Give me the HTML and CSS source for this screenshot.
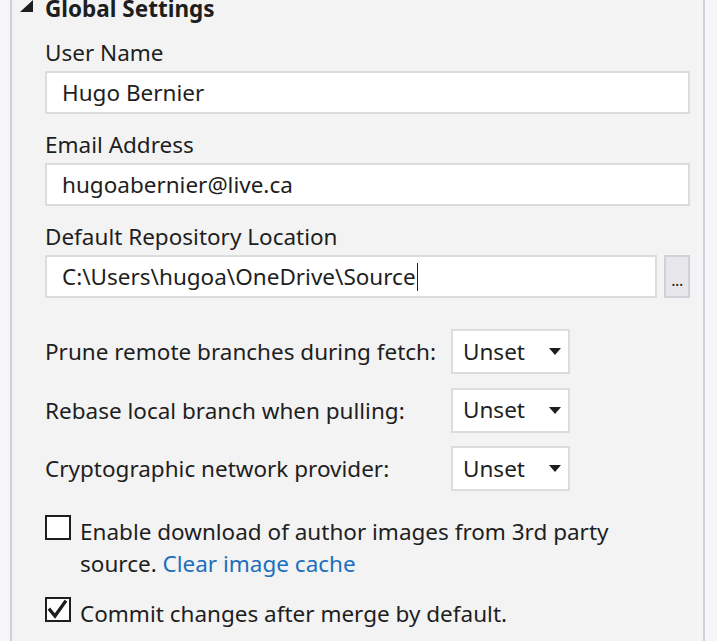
FILE: index.html
```html
<!DOCTYPE html>
<html lang="en">
<head>
<meta charset="utf-8">
<title>Global Settings</title>
<link rel="stylesheet" href="styles.css">
</head>
<body>
<div class="frame">
  <div class="panel">
    <div class="content">
      <div class="section-header">
        <svg class="expander" width="13" height="12" viewBox="0 0 13 12"><polygon points="13,0 13,12 0,12" fill="#1e1e1e"/></svg>
        <span class="section-title">Global Settings</span>
      </div>

      <div class="field first">
        <div class="label">User Name</div>
        <div class="textbox">Hugo Bernier</div>
      </div>

      <div class="field">
        <div class="label">Email Address</div>
        <div class="textbox">hugoabernier@live.ca</div>
      </div>

      <div class="field">
        <div class="label">Default Repository Location</div>
        <div class="path-row">
          <div class="textbox path">C:\Users\hugoa\OneDrive\Source<span class="caret"></span></div>
          <div class="browse">...</div>
        </div>
      </div>

      <div class="options">
        <div class="option-label">Prune remote branches during fetch:</div>
        <div class="combo"><span>Unset</span><svg width="12" height="7" viewBox="0 0 12 7"><polygon points="0,0 12,0 6,7" fill="#1e1e1e"/></svg></div>
        <div class="option-label">Rebase local branch when pulling:</div>
        <div class="combo"><span>Unset</span><svg width="12" height="7" viewBox="0 0 12 7"><polygon points="0,0 12,0 6,7" fill="#1e1e1e"/></svg></div>
        <div class="option-label">Cryptographic network provider:</div>
        <div class="combo"><span>Unset</span><svg width="12" height="7" viewBox="0 0 12 7"><polygon points="0,0 12,0 6,7" fill="#1e1e1e"/></svg></div>
      </div>

      <div class="check-row first">
        <div class="checkbox"></div>
        <div class="check-text">Enable download of author images from 3rd party<br>source. <span class="link">Clear image cache</span></div>
      </div>

      <div class="check-row second">
        <div class="checkbox"><svg width="22" height="21" viewBox="0 0 22 21"><polyline points="3,11 8,17 18,3" fill="none" stroke="#1e1e1e" stroke-width="3.4" stroke-linecap="square" stroke-linejoin="miter"/></svg></div>
        <div class="check-text">Commit changes after merge by default.</div>
      </div>
    </div>
  </div>
</div>
</body>
</html>
```

FILE: styles.css
```css
html, body {
  margin: 0;
  padding: 0;
}

body {
  background: #f6f6f8;
  font-family: "Noto Sans", "Open Sans", sans-serif;
  font-size: 22.5px;
  color: #1e1e1e;
  width: 717px;
  height: 641px;
  overflow: hidden;
}

.frame {
  height: 641px;
  padding-left: 10px;
  padding-right: 12px;
  display: flex;
}

.panel {
  flex: 1;
  display: flex;
  border-left: 2px solid #cfd0da;
  border-right: 2px solid #cfd0da;
}

.content {
  flex: 1;
  background: #f3f3f3;
  margin-right: 6px;
  padding-left: 33px;
  padding-right: 7px;
  overflow: hidden;
}

.section-header {
  display: flex;
  align-items: center;
  height: 25px;
  line-height: 25px;
  margin-top: -4px;
  margin-left: -25px;
}

.expander {
  margin-right: 12px;
  margin-top: -5px;
}

.section-title {
  font-weight: 700;
}

.field {
  margin-top: 18px;
}

.field.first {
  margin-top: 19px;
}

.label {
  line-height: 25px;
  margin-bottom: 6px;
}

.textbox {
  box-sizing: border-box;
  height: 43px;
  background: #ffffff;
  border: 2px solid #dcdcdf;
  padding: 0 15px;
  display: flex;
  align-items: center;
  line-height: 24px;
  white-space: nowrap;
}

.path-row {
  display: flex;
  gap: 7px;
}

.path {
  flex: 1;
}

.caret {
  display: inline-block;
  width: 1px;
  height: 28px;
  background: #1e1e1e;
  margin-left: 1px;
}

.browse {
  box-sizing: border-box;
  width: 26px;
  height: 43px;
  background: #e7e7eb;
  border: 2px solid #d0d1d9;
  display: flex;
  justify-content: center;
  align-items: flex-end;
  font-size: 16px;
  line-height: 14px;
  padding-bottom: 9px;
  letter-spacing: -0.5px;
}

.options {
  margin-top: 31px;
  display: grid;
  grid-template-columns: 406px 119px;
  row-gap: 13.5px;
  align-items: center;
}

.option-label {
  line-height: 25px;
  white-space: nowrap;
}

.combo {
  box-sizing: border-box;
  height: 45px;
  background: #ffffff;
  border: 2px solid #dcdcdf;
  display: flex;
  align-items: center;
  justify-content: space-between;
  padding: 0 7px 0 10px;
  line-height: 24px;
}

.check-row {
  display: flex;
  align-items: flex-start;
}

.check-row.first {
  margin-top: 24px;
}

.check-row.second {
  margin-top: 17px;
}

.checkbox {
  box-sizing: border-box;
  width: 26px;
  height: 25px;
  border: 2px solid #1e1e1e;
  background: #ffffff;
  flex: none;
  display: flex;
  align-items: center;
  justify-content: center;
}

.check-text {
  margin-left: 9px;
  margin-top: 1px;
  line-height: 32px;
  white-space: nowrap;
}

.link {
  color: #1b6fbd;
}
```
